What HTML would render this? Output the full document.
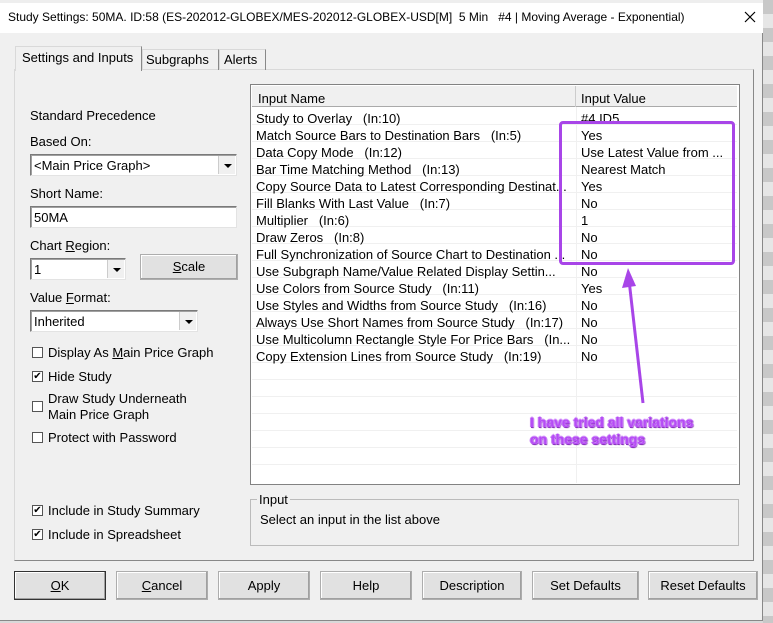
<!DOCTYPE html>
<html><head><meta charset="utf-8"><style>
*{margin:0;padding:0;box-sizing:border-box}
body{width:773px;height:623px;overflow:hidden;background:#d9d9d9;font-family:"Liberation Sans",Arial,sans-serif;font-size:13px;color:#000;position:relative}
.a{position:absolute;white-space:nowrap}
.dlg{position:absolute;left:0;top:0;width:763px;height:621px;background:#f0f0f0;border-right:1px solid #888;border-bottom:1px solid #888}
.title{position:absolute;left:0;top:3px;width:763px;height:30px;background:#fff}
.sunk{position:absolute;background:#fff;border:1px solid #7a7a7a;border-right-color:#e3e3e3;border-bottom-color:#e3e3e3;box-shadow:inset 1px 1px 0 #a0a0a0}
.dd{position:absolute;right:1px;top:1px;bottom:1px;width:17px;background:#f0f0f0;border-left:1px solid #ccc}
.dd:after{content:"";position:absolute;left:5px;top:8px;border:4px solid transparent;border-top:4px solid #000;border-bottom:0}
.btn{position:absolute;background:#e1e1e1;border:1px solid #adadad;box-shadow:inset -1px -1px 0 #a0a0a0,inset 1px 1px 0 #fff;text-align:center;line-height:27px;height:29px;top:571px}
.cb{position:absolute;width:11px;height:11px;border:1px solid #555;background:#fff;font-size:10px;line-height:9px;text-align:center}
.row{position:absolute;left:252px;width:485px;height:17px;border-bottom:1px solid #f0f0f0}
.row span{position:absolute;top:3px}
u{text-decoration:underline}
</style></head><body>
<div style="position:absolute;left:763px;top:0;width:10px;height:623px;background:repeating-linear-gradient(#c8c8c8 0 14px,#e6e6e6 14px 28px)"></div>
<div class="dlg">
<div style="position:absolute;left:0;top:0;width:763px;height:3px;background:#eee"></div>
<div class="title"></div>
<div class="a" style="left:8px;top:10px;font-size:12px">Study Settings: 50MA. ID:58 (ES-202012-GLOBEX/MES-202012-GLOBEX-USD[M]&nbsp; 5 Min&nbsp;&nbsp; #4 | Moving Average - Exponential)</div>
<svg class="a" style="left:744px;top:11px" width="12" height="12"><path d="M1 1L11 11M11 1L1 11" stroke="#000" stroke-width="1.2"/></svg>
<!-- tab panel -->
<div style="position:absolute;left:14px;top:69px;width:740px;height:492px;border:1px solid #d9d9d9;border-right-color:#888;border-bottom-color:#888;background:#f0f0f0"></div>
<div style="position:absolute;left:15px;top:46px;width:127px;height:25px;background:#f0f0f0;border:1px solid #d9d9d9;border-right-color:#888;border-bottom:none"></div>
<div class="a" style="left:22px;top:50px">Settings and Inputs</div>
<div style="position:absolute;left:142px;top:49px;width:77px;height:21px;border:1px solid #d9d9d9;border-right-color:#888;border-bottom:none"></div>
<div class="a" style="left:146px;top:52px">Subgraphs</div>
<div style="position:absolute;left:219px;top:49px;width:47px;height:21px;border:1px solid #d9d9d9;border-right-color:#888;border-bottom:none"></div>
<div class="a" style="left:224px;top:52px">Alerts</div>
<!-- left -->
<div class="a" style="left:30px;top:108px">Standard Precedence</div>
<div class="a" style="left:30px;top:134px">Based On:</div>
<div class="sunk" style="left:30px;top:154px;width:207px;height:22px"><span class="a" style="left:3px;top:3px">&lt;Main Price Graph&gt;</span><div class="dd"></div></div>
<div class="a" style="left:30px;top:186px">Short Name:</div>
<div class="sunk" style="left:30px;top:206px;width:207px;height:22px"><span class="a" style="left:3px;top:3px">50MA</span></div>
<div class="a" style="left:30px;top:238px">Chart <u>R</u>egion:</div>
<div class="sunk" style="left:30px;top:258px;width:96px;height:22px"><span class="a" style="left:3px;top:3px">1</span><div class="dd"></div></div>
<div class="btn" style="left:140px;top:254px;width:98px;height:26px;line-height:24px"><u>S</u>cale</div>
<div class="a" style="left:30px;top:290px">Value <u>F</u>ormat:</div>
<div class="sunk" style="left:30px;top:310px;width:168px;height:22px"><span class="a" style="left:3px;top:3px">Inherited</span><div class="dd"></div></div>
<div class="cb" style="left:32px;top:347px"></div><div class="a" style="left:48px;top:345px">Display As <u>M</u>ain Price Graph</div>
<div class="cb" style="left:32px;top:371px">✔</div><div class="a" style="left:48px;top:369px">Hide Study</div>
<div class="cb" style="left:32px;top:401px"></div><div class="a" style="left:48px;top:391px">Draw Study Underneath</div><div class="a" style="left:48px;top:407px">Main Price Graph</div>
<div class="cb" style="left:32px;top:432px"></div><div class="a" style="left:48px;top:430px">Protect with Password</div>
<div class="cb" style="left:32px;top:505px">✔</div><div class="a" style="left:48px;top:503px">Include in Study Summary</div>
<div class="cb" style="left:32px;top:529px">✔</div><div class="a" style="left:48px;top:527px">Include in Spreadsheet</div>
<!-- list -->
<div style="position:absolute;left:250px;top:84px;width:490px;height:401px;background:#fff;border:1px solid #828282"></div>
<div style="position:absolute;left:576px;top:107px;width:1px;height:376px;background:#f0f0f0"></div>
<div style="position:absolute;left:252px;top:86px;width:485px;height:21px;background:#f0f0f0;border-bottom:1px solid #aaa"></div>
<div style="position:absolute;left:575px;top:86px;width:1px;height:21px;background:#ccc"></div>
<div class="a" style="left:258px;top:91px">Input Name</div>
<div class="a" style="left:581px;top:91px">Input Value</div>
<div class="row" style="top:108px"><span style="left:4px">Study to Overlay&nbsp;&nbsp; (In:10)</span><span style="left:329px">#4 ID5</span></div>
<div class="row" style="top:125px"><span style="left:4px">Match Source Bars to Destination Bars&nbsp;&nbsp; (In:5)</span><span style="left:329px">Yes</span></div>
<div class="row" style="top:142px"><span style="left:4px">Data Copy Mode&nbsp;&nbsp; (In:12)</span><span style="left:329px">Use Latest Value from ...</span></div>
<div class="row" style="top:159px"><span style="left:4px">Bar Time Matching Method&nbsp;&nbsp; (In:13)</span><span style="left:329px">Nearest Match</span></div>
<div class="row" style="top:176px"><span style="left:4px">Copy Source Data to Latest Corresponding Destinat...</span><span style="left:329px">Yes</span></div>
<div class="row" style="top:193px"><span style="left:4px">Fill Blanks With Last Value&nbsp;&nbsp; (In:7)</span><span style="left:329px">No</span></div>
<div class="row" style="top:210px"><span style="left:4px">Multiplier&nbsp;&nbsp; (In:6)</span><span style="left:329px">1</span></div>
<div class="row" style="top:227px"><span style="left:4px">Draw Zeros&nbsp;&nbsp; (In:8)</span><span style="left:329px">No</span></div>
<div class="row" style="top:244px"><span style="left:4px">Full Synchronization of Source Chart to Destination ...</span><span style="left:329px">No</span></div>
<div class="row" style="top:261px"><span style="left:4px">Use Subgraph Name/Value Related Display Settin...</span><span style="left:329px">No</span></div>
<div class="row" style="top:278px"><span style="left:4px">Use Colors from Source Study&nbsp;&nbsp; (In:11)</span><span style="left:329px">Yes</span></div>
<div class="row" style="top:295px"><span style="left:4px">Use Styles and Widths from Source Study&nbsp;&nbsp; (In:16)</span><span style="left:329px">No</span></div>
<div class="row" style="top:312px"><span style="left:4px">Always Use Short Names from Source Study&nbsp;&nbsp; (In:17)</span><span style="left:329px">No</span></div>
<div class="row" style="top:329px"><span style="left:4px">Use Multicolumn Rectangle Style For Price Bars&nbsp;&nbsp; (In...</span><span style="left:329px">No</span></div>
<div class="row" style="top:346px"><span style="left:4px">Copy Extension Lines from Source Study&nbsp;&nbsp; (In:19)</span><span style="left:329px">No</span></div>
<div class="row" style="top:363px"></div><div class="row" style="top:380px"></div><div class="row" style="top:397px"></div><div class="row" style="top:414px"></div><div class="row" style="top:431px"></div><div class="row" style="top:448px"></div>
<!-- annotation -->
<div style="position:absolute;left:559px;top:121px;width:176px;height:144px;border:3px solid #a845e8;border-radius:4px"></div>
<svg class="a" style="left:600px;top:260px" width="60" height="150"><line x1="43" y1="143" x2="29" y2="20" stroke="#a845e8" stroke-width="3"/><polygon points="28,8 22,28 36,26" fill="#a845e8"/></svg>
<div class="a" style="left:530px;top:414px;font-weight:bold;font-size:14px;line-height:17px;color:#b64cf5;text-shadow:1px 0 0 #c880f5,-1px 0 0 #c880f5,0 1px 0 #8a30c0,0 -1px 0 #e0b0ff,1px 1px 1px #7a2aa8">I have tried all variations<br>on these settings</div>
<!-- input group -->
<div style="position:absolute;left:250px;top:499px;width:489px;height:47px;border:1px solid #bbb"></div>
<div class="a" style="left:257px;top:492px;background:#f0f0f0;padding:0 2px">Input</div>
<div class="a" style="left:260px;top:512px">Select an input in the list above</div>
<!-- buttons -->
<div class="btn" style="left:14px;width:92px;border:1px solid #333"><u>O</u>K</div>
<div class="btn" style="left:116px;width:92px"><u>C</u>ancel</div>
<div class="btn" style="left:218px;width:92px">Apply</div>
<div class="btn" style="left:320px;width:92px">Help</div>
<div class="btn" style="left:422px;width:100px">Description</div>
<div class="btn" style="left:532px;width:107px">Set Defaults</div>
<div class="btn" style="left:648px;width:110px">Reset Defaults</div>
</div>
</body></html>
